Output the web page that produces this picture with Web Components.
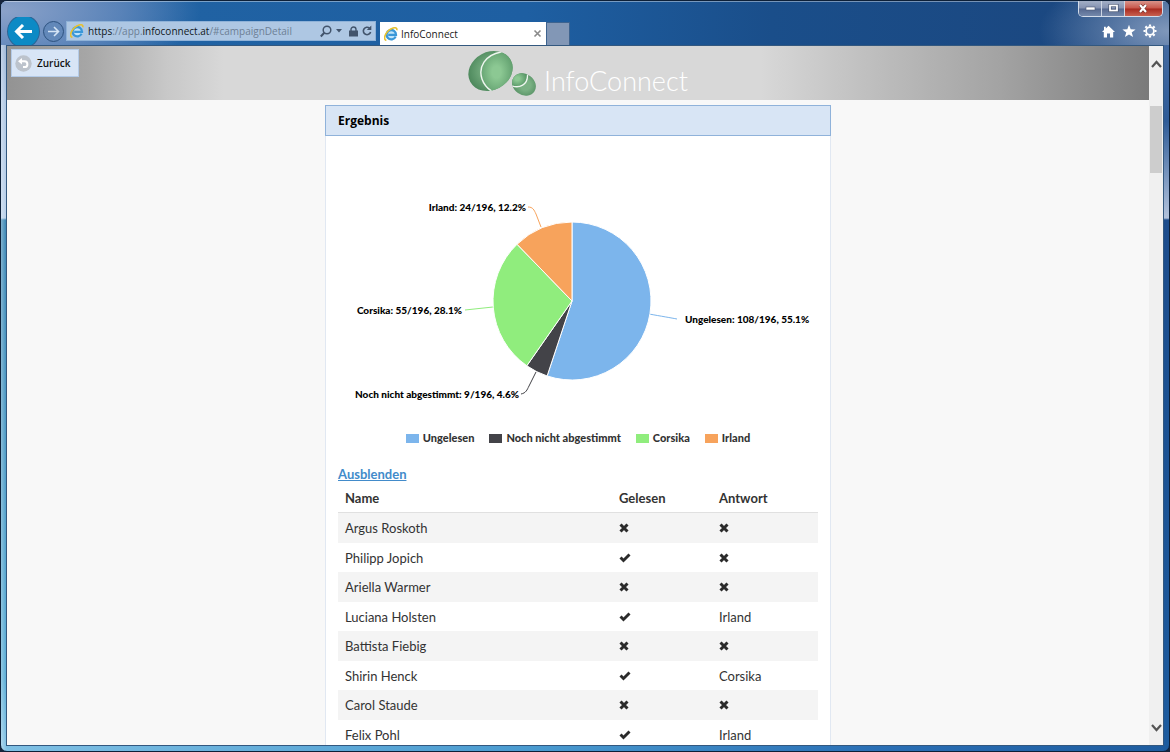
<!DOCTYPE html>
<html lang="de">
<head>
<meta charset="utf-8">
<title>InfoConnect</title>
<style>
html, body { margin: 0; height: 100%; }
body { overflow: hidden; font-family: "Open Sans", "Noto Sans", sans-serif; background: #16243c; }
</style>
</head>
<body>
<browser-window>
  <title-bar slot="title"></title-bar>
  <nav-bar slot="nav">
    <browser-tab slot="tabs">InfoConnect</browser-tab>
  </nav-bar>
  <app-header></app-header>
  <result-panel heading="Ergebnis">
    <pie-chart></pie-chart>
    <chart-legend></chart-legend>
    <answer-list></answer-list>
  </result-panel>
</browser-window>

<script>
function define(name, html, setup) {
  customElements.define(name, class extends HTMLElement {
    connectedCallback() {
      if (this.shadowRoot) return;
      const root = this.attachShadow({ mode: "open" });
      root.innerHTML = html;
      if (setup) setup(this, root);
    }
  });
}

const slices = [
  { name: "Ungelesen", count: 108, share: "55.1", color: "#7cb5ec" },
  { name: "Noch nicht abgestimmt", count: 9, share: "4.6", color: "#434348" },
  { name: "Corsika", count: 55, share: "28.1", color: "#90ed7d" },
  { name: "Irland", count: 24, share: "12.2", color: "#f7a35c" }
];
const total = 196;

const people = [
  ["Argus Roskoth", false, ""],
  ["Philipp Jopich", true, ""],
  ["Ariella Warmer", false, ""],
  ["Luciana Holsten", true, "Irland"],
  ["Battista Fiebig", false, ""],
  ["Shirin Henck", true, "Corsika"],
  ["Carol Staude", false, ""],
  ["Felix Pohl", true, "Irland"]
];

define("browser-window", `
<style>
:host {
  display: flex; flex-direction: column; height: 100vh; box-sizing: border-box;
  border: 1px solid #0d2038; border-radius: 7px; overflow: hidden;
  background:
    linear-gradient(to right, #fff6, #fff0 6px) 0 0 / 6px 100% no-repeat,
    linear-gradient(#8ba6cb 0, #a9c3e2 100px, #b4cde9 217px, #2d7eaf 219px, #4fa8d4 680px, #7fc0e4) 0 0 / 6px 100% no-repeat,
    linear-gradient(#4f72a6 0, #2f5c98 120px, #b3c3dc 217px, #1c4c8c 219px, #1d5c9f) 100% 0 / 6px 100% no-repeat,
    linear-gradient(to right, #7fc0e4, #4a9bd0 45%, #2a6fb5 75%, #1e5c9f) 0 100% / 100% 7px no-repeat,
    #1d5896;
}
.chrome {
  flex: none; display: flex; flex-direction: column;
  background:
    linear-gradient(#ffffff66, #ffffff66) 0 0 / 100% 1px no-repeat,
    radial-gradient(ellipse 130px 60px at 100% 30px, #8098bb, #6b86ad99 50%, #6b86ad00),
    radial-gradient(ellipse 200px 70px at 0 10px, #8ba2c9, #6e8fc0aa 60%, #6e8fc000),
    linear-gradient(to right, #4677b2, #2062a3 16%, #1e5fa2 45%, #1a4e8a 66%, #1b4881 90%, #2c5790);
}
.view {
  flex: 1; min-height: 0; display: flex; margin: 0 5px 5px;
  border: 1px solid #33587f; background: #f8f8f8;
}
.page { flex: 1; min-width: 0; overflow: hidden; display: flex; flex-direction: column; }
</style>
<div class="chrome"><slot name="title"></slot><slot name="nav"></slot></div>
<div class="view">
  <div class="page"><slot></slot></div>
  <scroll-rail></scroll-rail>
</div>`);

define("title-bar", `
<style>
:host { display: flex; justify-content: flex-end; height: 16px; padding-right: 6px; }
.group { display: flex; border: 1px solid #d3dcea; border-top: 0; border-radius: 0 0 5px 5px; overflow: hidden; }
button {
  display: grid; place-items: center; width: 23px; height: 15px; padding: 0; border: 0;
  border-right: 1px solid #cdd6e4;
  background: linear-gradient(#a3afc6, #8492b1 48%, #55688f 52%, #7488ab);
}
.close { width: 37px; border: 0; background: linear-gradient(#d9938a, #c8564a 48%, #a82a1f 52%, #c8604f); }
</style>
<div class="group">
  <button aria-label="Minimieren"><svg width="11" height="7"><rect x="1" y="2" width="9" height="3" fill="#fff" stroke="#4b5873" stroke-width=".6"/></svg></button>
  <button aria-label="Maximieren"><svg width="11" height="9"><rect x="2" y="1.5" width="7" height="5" fill="none" stroke="#3f4c68" stroke-width="3"/><rect x="2" y="1.5" width="7" height="5" fill="none" stroke="#fff" stroke-width="1.8"/></svg></button>
  <button class="close" aria-label="Schließen"><svg width="11" height="9" fill="none"><path d="M2 1l6 7M8 1l-6 7" stroke="#6b2c28" stroke-width="3.4"/><path d="M2 1l6 7M8 1l-6 7" stroke="#fff" stroke-width="2.2"/></svg></button>
</div>`);

define("ie-logo", `
<style>:host { display: block; flex: none; width: 14px; height: 14px; } svg { display: block; }</style>
<svg width="14" height="14" viewBox="0 0 14 14" fill="none">
  <circle cx="7.3" cy="7.6" r="5.6" fill="#bfe4fa"/>
  <path d="M11.6 9.6A4.7 4.7 0 1 1 12 7.8H4.2" stroke="#3a97d8" stroke-width="2.3"/>
  <path d="M2.400 13.400C-2 12.600 2.200 3 9.200 1c3-.8 4 .5 3.600 2.200" stroke="#e6c130" stroke-width="1.600"/>
</svg>`);

define("nav-bar", `
<style>
:host { display: flex; align-items: center; height: 28px; padding-left: 7px; overflow: hidden; color: #111; font-size: 10px; }
button { flex: none; display: grid; place-items: center; padding: 0; border: 0; background: none; }
.back { width: 31px; height: 31px; border-radius: 50%; background: #0c8ac5; box-shadow: 0 0 0 1px #2c6494; }
.fwd { width: 21px; height: 21px; margin-left: 4px; border-radius: 50%; box-sizing: border-box; border: 1px solid #2d527f; background: #6288b9; }
.address {
  flex: 0 1 310px; min-width: 0; display: flex; align-items: center; height: 20px; box-sizing: border-box;
  margin-left: 2px; padding: 0 3px; gap: 4px; border: 1px solid #8fb2d8; background: #aec7e3;
}
.url { flex: 1; min-width: 0; white-space: nowrap; overflow: hidden; color: #6d7f95; outline: 0; }
.url b { font-weight: 400; color: #101820; }
.address button { width: 10px; height: 14px; }
.tabs { flex: none; align-self: stretch; display: flex; margin: 5px auto 0 4px; }
.new { width: 24px; height: 23px; background: #8297b6; border: 1px solid #3d638f; border-width: 1px 1px 0; box-sizing: border-box; }
.tools { flex: none; display: flex; gap: 7px; padding-right: 12px; }
.tools button { width: 14px; height: 16px; }
</style>
<button class="back" aria-label="Zurück"><svg width="19" height="15" fill="none" stroke="#fff" stroke-width="3"><path d="M3 7.500H18M9 1L2.500 7.500L9 14"/></svg></button>
<button class="fwd" aria-label="Vorwärts"><svg width="13" height="11" fill="none" stroke="#d5e4f5" stroke-width="1.6"><path d="M1 5.500h10M7 1l4.500 4.500L7 10"/></svg></button>
<div class="address">
  <ie-logo></ie-logo>
  <div class="url" role="textbox" aria-label="Adresse" contenteditable="true" spellcheck="false"><b>https</b>://app.<b>infoconnect.at</b>/#campaignDetail</div>
  <button aria-label="Suchen"><svg width="12" height="13" fill="none" stroke="#42546c"><circle cx="7" cy="5" r="3.800" stroke-width="1.500"/><path d="M4.300 7.800L.8 11.500" stroke-width="2"/></svg></button>
  <button aria-label="Verlauf"><svg width="6" height="4"><path d="M0 0h6L3 3.500z" fill="#42546c"/></svg></button>
  <button aria-label="Sicherheit"><svg width="9" height="11"><rect y="4.500" width="9" height="6" fill="#42546c"/><path d="M2 5V3.500a2.500 2.500 0 0 1 5 0V5" fill="none" stroke="#42546c" stroke-width="1.400"/></svg></button>
  <button aria-label="Aktualisieren"><svg width="10" height="12" fill="none"><path d="M7.500 3.200A3.700 3.700 0 1 0 8.600 7" stroke="#42546c" stroke-width="1.600"/><path d="M9.300.5v4.500H4.800z" fill="#42546c"/></svg></button>
</div>
<div class="tabs"><slot name="tabs"></slot><button class="new" aria-label="Neuer Tab"></button></div>
<div class="tools">
  <button aria-label="Startseite"><svg width="13" height="13" viewBox="0 0 13 13" fill="#fff"><path d="M6.500.8L13 7h-1.800v5.500H8V8.500H5v4H1.800V7H0l2-2V1.800h1.800v1.600z"/></svg></button>
  <button aria-label="Favoriten"><svg width="14" height="14" viewBox="0 0 14 14" fill="#fff"><path d="M7 .8l1.700 4.400 4.900.2-3.900 3 1.400 4.700L7 10.400l-4.100 2.700 1.400-4.700-3.900-3 4.900-.2z"/></svg></button>
  <button aria-label="Extras"><svg width="14" height="14" viewBox="-7 -7 14 14" fill="none" stroke="#fff"><circle r="3.900" stroke-width="1.800"/><path d="M0-6.500V-4.500M0 6.500V4.500M-6.500 0H-4.500M6.500 0H4.500M-4.600-4.600l1.400 1.400M4.600 4.600L3.200 3.200M4.600-4.600L3.200-3.200M-4.600 4.600l1.400-1.400" stroke-width="2.200"/></svg></button>
</div>`);

define("browser-tab", `
<style>
:host { display: flex; align-items: center; gap: 3px; box-sizing: border-box; width: 166px; height: 23px; padding: 0 4px; background: #fff; color: #1a1a1a; font-size: 10px; }
span { flex: 1; }
button { display: grid; padding: 0; border: 0; background: none; }
</style>
<ie-logo></ie-logo><span><slot></slot></span>
<button aria-label="Tab schließen"><svg width="9" height="9"><path d="M1.500 1.500l6 6M7.500 1.500l-6 6" stroke="#8a8a8a" stroke-width="1.600"/></svg></button>`);

define("scroll-rail", `
<style>
:host { flex: none; display: flex; flex-direction: column; width: 14px; background: #f0f0f0; }
button { display: grid; place-items: center; height: 36px; padding: 0; border: 0; background: none; }
.track { flex: 1; padding-top: 24px; }
.thumb { height: 67px; margin: 0 1px; background: #cdcdcd; }
</style>
<button aria-label="Nach oben"><svg width="11" height="9"><path d="M1 7l4.500-5L10 7" fill="none" stroke="#555" stroke-width="2.200"/></svg></button>
<div class="track"><div class="thumb"></div></div>
<button aria-label="Nach unten"><svg width="11" height="9"><path d="M1 2l4.500 5L10 2" fill="none" stroke="#555" stroke-width="2.200"/></svg></button>`);

define("app-header", `
<style>
:host {
  flex: none; display: grid; grid-template-columns: 1fr auto 1fr; align-items: start; height: 54px; box-sizing: border-box; padding: 3px 4px 0;
  background: linear-gradient(to right, #939393, #a6a6a6 7%, #c8c8c8 14%, #d8d8d8 19%, #d8d8d8 66%, #c0c0c0 75%, #a3a3a3 87%, #7a7a7a);
}
button {
  justify-self: start; display: flex; align-items: center; gap: 5px; height: 28px; padding: 0 8px 0 3px;
  border: 1px solid #b4cbe8; background: #d8e5f6; color: #111; font: 600 10px "Open Sans", sans-serif;
}
.brand { display: flex; gap: 8px; color: #fff; font: 300 27px/32px Lato, sans-serif; }
.brand svg { display: block; margin-top: 2px; }
.brand span { margin-top: 16px; }
</style>
<button><svg width="17" height="17" viewBox="0 0 17 17"><circle cx="8.500" cy="8.500" r="8.200" fill="#bcc3cc"/><path d="M5.500 6.300h4a2.800 2.800 0 0 1 0 5.800H8" fill="none" stroke="#fff" stroke-width="2"/><path d="M3 6.300L7 3v6.600z" fill="#fff"/></svg>Zurück</button>
<div class="brand">
  <svg width="68" height="46" viewBox="0 0 68 46" role="img" aria-label="InfoConnect Logo">
    <defs>
      <radialGradient id="a" cx=".55" cy=".5" r=".6"><stop offset=".3" stop-color="#7ab184"/><stop offset="1" stop-color="#437f53"/></radialGradient>
      <radialGradient id="b" cx=".42" cy=".5" r=".6"><stop offset=".2" stop-color="#8cc893"/><stop offset="1" stop-color="#508f60"/></radialGradient>
      <clipPath id="big"><ellipse cx="22.500" cy="20" rx="23" ry="19" transform="rotate(-28 22.500 20)"/></clipPath>
      <clipPath id="small"><ellipse cx="56" cy="33.500" rx="12.500" ry="10.500" transform="rotate(35 56 33.500)"/></clipPath>
    </defs>
    <g clip-path="url(#big)"><rect x="-2" y="-2" width="50" height="44" fill="url(#a)"/><path d="M33 1C17 4 10 16 14 28C16 34 20 38 25 41L50 46V-4z" fill="url(#b)" stroke="#eef6ef" stroke-width="1.400"/></g>
    <g clip-path="url(#small)"><rect x="42" y="20" width="28" height="28" fill="url(#a)"/><path d="M42 34C50 38 62 35 59 20H42z" fill="url(#b)" stroke="#eef6ef" stroke-width="1.300"/></g>
  </svg>
  <span>InfoConnect</span>
</div>`);

define("result-panel", `
<style>
:host { flex: 1 0 auto; display: flex; flex-direction: column; width: 100%; max-width: 506px; margin: 5px auto 0; box-sizing: border-box; }
h1 { margin: 0; height: 31px; padding: 0 12px; box-sizing: border-box; border: 1px solid #8fb2da; background: #d8e5f5; color: #000; font: 700 12px/29px "Open Sans", sans-serif; }
.body { flex: 1; padding: 12px 12px 0; border: 1px solid #e1e8f2; border-width: 0 1px; background: #fff; }
</style>
<h1></h1><div class="body"><slot></slot></div>`,
(host, root) => { root.querySelector("h1").textContent = host.getAttribute("heading"); });

define("pie-chart", `
<style>
:host { display: block; }
svg { display: block; width: 100%; height: 278px; overflow: visible; }
text { font: 900 10px Lato, sans-serif; fill: #000; }
</style>
<svg viewBox="0 0 480 278" role="img" aria-label="Ergebnis der Abstimmung"></svg>`,
(host, root) => {
  const cx = 234, cy = 153, r = 79;
  const labels = [
    { x: 347, y: 175, anchor: "start", line: "M339 171C334 170 322 168 311 166" },
    { x: 181, y: 250, anchor: "end", line: "M183 246C188 245 189 242 191 238L198 224" },
    { x: 124, y: 166, anchor: "end", line: "M127 162L155 159" },
    { x: 188, y: 63, anchor: "end", line: "M190 59C195 59 196 62 198 66L203 79" }
  ];
  const at = f => [cx + r * Math.sin(f * 2 * Math.PI), cy - r * Math.cos(f * 2 * Math.PI)].map(n => n.toFixed(2)).join(" ");
  let sum = 0;
  root.querySelector("svg").innerHTML = slices.map((s, i) => {
    const from = sum / total;
    sum += s.count;
    const large = s.count / total > .5 ? 1 : 0;
    const l = labels[i];
    return `<path d="${l.line}" fill="none" stroke="${s.color}"/>
      <path d="M${cx} ${cy}L${at(from)}A${r} ${r} 0 ${large} 1 ${at(sum / total)}Z" fill="${s.color}" stroke="#fff" stroke-linejoin="round"/>
      <text x="${l.x}" y="${l.y}" text-anchor="${l.anchor}">${s.name}: ${s.count}/${total}, ${s.share}%</text>`;
  }).join("");
});

define("chart-legend", `
<style>
:host { display: block; }
ul { display: flex; justify-content: center; gap: 15px; margin: 0; padding: 0; list-style: none; color: #333; font: 900 11px/24px Lato, sans-serif; }
li { display: flex; align-items: center; gap: 4px; }
i { width: 13px; height: 9px; }
</style>
<ul></ul>`,
(host, root) => {
  root.querySelector("ul").innerHTML = slices.map(s => `<li><i style="background:${s.color}"></i>${s.name}</li>`).join("");
});

define("mark-icon", `
<style>:host { display: block; } svg { display: block; }</style>`,
(host, root) => {
  const yes = host.hasAttribute("yes");
  root.innerHTML += yes
    ? `<svg width="12" height="10" role="img" aria-label="Ja"><path d="M1.500 4.500L4.500 7.500L10.500 1.500" fill="none" stroke="#2b2b2b" stroke-width="2.900"/></svg>`
    : `<svg width="10" height="10" role="img" aria-label="Nein"><path d="M1.500 1.500L8.500 8.500M8.500 1.500L1.500 8.500" fill="none" stroke="#2b2b2b" stroke-width="3"/></svg>`;
});

define("answer-list", `
<style>
:host { display: block; padding-top: 14px; color: #333; font: 13px/20px Lato, sans-serif; }
a { display: block; width: max-content; color: #428bca; font-weight: 700; }
table { width: 100%; table-layout: fixed; border-collapse: separate; border-spacing: 0; }
th, td { height: 29px; padding: 0 7px; text-align: left; vertical-align: middle; }
th { height: 28px; border-bottom: 1px solid #e0e0e0; font-weight: 700; }
th:nth-child(1) { width: 260px; }
th:nth-child(2) { width: 86px; }
tr:nth-child(odd) td { height: 30px; background: #f4f4f4; }
</style>
<a href="#ausblenden">Ausblenden</a>
<table>
  <thead><tr><th scope="col">Name</th><th scope="col">Gelesen</th><th scope="col">Antwort</th></tr></thead>
  <tbody></tbody>
</table>`,
(host, root) => {
  root.querySelector("tbody").innerHTML = people.map(([name, read, answer]) =>
    `<tr><td>${name}</td><td><mark-icon${read ? " yes" : ""}></mark-icon></td><td>${answer || "<mark-icon></mark-icon>"}</td></tr>`).join("");
});
</script>
</body>
</html>
